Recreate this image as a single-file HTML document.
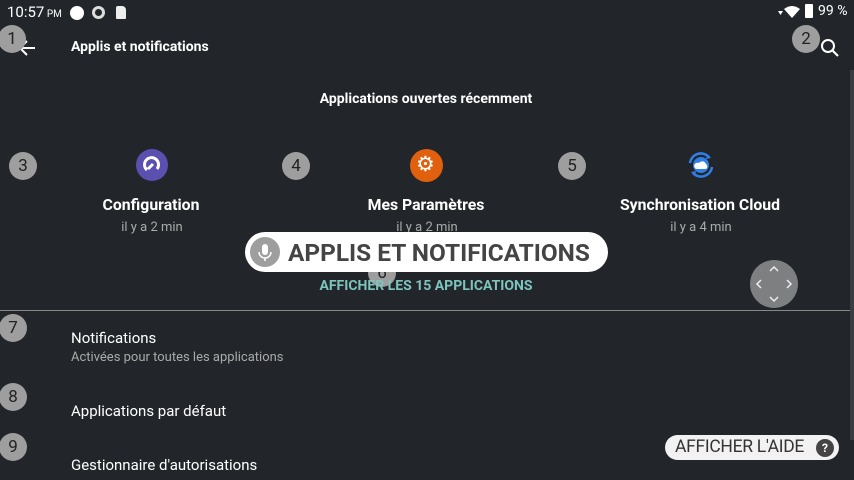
<!DOCTYPE html>
<html><head><meta charset="utf-8"><style>
*{margin:0;padding:0;box-sizing:border-box}
body{width:854px;height:480px;overflow:hidden;background:#22262b;font-family:"Roboto","Liberation Sans",sans-serif;color:#fff;position:relative}
.a{position:absolute;white-space:nowrap}
.b{position:absolute;width:28px;height:28px;border-radius:50%;background:#9e9e9e;color:#222;font-size:17px;text-align:center;line-height:28px}
.t{font-size:15.8px;color:#fff;transform:translateX(-50%)}
.s{font-size:13px;color:#aaa;transform:translateX(-50%)}
</style></head><body>
<div class="a" style="left:7px;top:3px;font-size:15px">10:57<span style="font-size:10px"> PM</span></div>
<div class="a" style="left:70px;top:6px;width:14px;height:14px;border-radius:50%;background:#fff"></div>
<div class="a" style="left:92px;top:6px;width:13px;height:13px;border-radius:50%;border:3px solid #ddd"></div>
<div class="a" style="left:116px;top:6px;width:10px;height:13px;background:#eee;border-radius:2px 4px 1px 1px"></div>
<svg class="a" style="left:776px;top:5px" width="26" height="14"><path d="M2 6h5l-2.5 4z" fill="#fff"/><path d="M8 4 Q16 -2 24 4 L16 13z" fill="#fff"/></svg>
<div class="a" style="left:805px;top:4px;width:8px;height:14px;background:#fff;border-radius:1px"></div>
<div class="a" style="left:818px;top:3px;font-size:14px">99 %</div>
<svg class="a" style="left:17px;top:38px" width="20" height="20"><path d="M18 10H3M10 3L3 10l7 7" stroke="#fff" stroke-width="2" fill="none"/></svg>
<div class="a" style="left:71px;top:39px;font-size:14px;font-weight:bold">Applis et notifications</div>
<svg class="a" style="left:819px;top:37px" width="22" height="22"><circle cx="9" cy="9" r="6" stroke="#fff" stroke-width="2" fill="none"/><path d="M13 13l6 6" stroke="#fff" stroke-width="2.2"/></svg>
<div class="b" style="left:-2px;top:25px">1</div>
<div class="b" style="left:792px;top:25px">2</div>
<div class="a" style="left:426px;top:91px;font-size:14px;font-weight:bold;transform:translateX(-50%)">Applications ouvertes récemment</div>
<div class="b" style="left:9px;top:152px">3</div>
<div class="b" style="left:282px;top:152px">4</div>
<div class="b" style="left:558px;top:152px">5</div>
<div class="a" style="left:136px;top:149px;width:32px;height:32px;border-radius:50%;background:#5b4fb0"></div>
<svg class="a" style="left:136px;top:149px" width="32" height="32"><path d="M11 21a7 7 0 1 1 10-1" stroke="#fff" stroke-width="3" fill="none"/><path d="M12 20l5-5" stroke="#fff" stroke-width="3"/></svg>
<div class="a" style="left:410px;top:149px;width:33px;height:33px;border-radius:50%;background:#e0600e"></div>
<div class="a" style="left:416px;top:152px;font-size:21px;color:#fff">⚙</div>
<svg class="a" style="left:685px;top:150px" width="32" height="30"><path d="M5 13a11 11 0 0 1 19-6M27 17a11 11 0 0 1-19 6" stroke="#2f7fe6" stroke-width="2.5" fill="none"/><path d="M22 4l4 4-5 1zM10 26l-4-4 5-1z" fill="#2f7fe6"/><circle cx="16" cy="15" r="8" fill="#2f7fe6"/><path d="M11 19h10a3 3 0 0 0 0-5 4 4 0 0 0-7-1 3 3 0 0 0-3 6z" fill="#fff"/></svg>
<div class="a t" style="left:151px;top:195px;font-weight:bold">Configuration</div>
<div class="a s" style="left:152px;top:220px">il y a 2 min</div>
<div class="a t" style="left:426px;top:195px;font-weight:bold">Mes Paramètres</div>
<div class="a s" style="left:427px;top:220px">il y a 2 min</div>
<div class="a t" style="left:700px;top:195px;font-weight:bold">Synchronisation Cloud</div>
<div class="a s" style="left:701px;top:220px">il y a 4 min</div>
<div class="b" style="left:368px;top:259px">6</div>
<div class="a" style="left:426px;top:278px;font-size:14px;font-weight:bold;color:#7cc4bc;transform:translateX(-50%)">AFFICHER LES 15 APPLICATIONS</div>
<div class="a" style="left:245px;top:232px;width:363px;height:40px;border-radius:20px;background:#fff"></div>
<div class="a" style="left:250px;top:237px;width:30px;height:30px;border-radius:50%;background:#9e9e9e"></div>
<svg class="a" style="left:250px;top:237px" width="30" height="30"><rect x="12" y="7" width="6" height="11" rx="3" fill="#fff"/><path d="M9 15a6 6 0 0 0 12 0M15 21v3" stroke="#fff" stroke-width="1.5" fill="none"/></svg>
<div class="a" style="left:288px;top:238px;font-size:24.4px;font-weight:bold;color:#444">APPLIS ET NOTIFICATIONS</div>
<div class="a" style="left:750px;top:260px;width:48px;height:48px;border-radius:50%;background:#7d7f81"></div>
<svg class="a" style="left:750px;top:260px" width="48" height="48" fill="none" stroke="#eee" stroke-width="1.5"><path d="M20 11l4-4 4 4M20 37l4 4 4-4M11 20l-4 4 4 4M37 20l4 4-4 4"/></svg>
<div class="a" style="left:0;top:310px;width:854px;height:1px;background:#888"></div>
<div class="a" style="left:850px;top:70px;width:4px;height:370px;background:#3a3e42"></div>
<div class="b" style="left:-1px;top:314px">7</div>
<div class="a" style="left:71px;top:329px;font-size:15px">Notifications</div>
<div class="a" style="left:71px;top:350px;font-size:13px;color:#aaa">Activées pour toutes les applications</div>
<div class="b" style="left:-1px;top:383px">8</div>
<div class="a" style="left:71px;top:402px;font-size:15px">Applications par défaut</div>
<div class="b" style="left:-1px;top:433px">9</div>
<div class="a" style="left:71px;top:456px;font-size:15px">Gestionnaire d'autorisations</div>
<div class="a" style="left:665px;top:435px;width:174px;height:25px;border-radius:13px;background:#f2f2f2"></div>
<div class="a" style="left:675px;top:437px;font-size:17.5px;color:#333;letter-spacing:-0.3px">AFFICHER L'AIDE</div>
<div class="a" style="left:816px;top:439px;width:18px;height:18px;border-radius:50%;background:#444;color:#fff;font-size:12px;text-align:center;line-height:18px;font-weight:bold">?</div>
</body></html>
